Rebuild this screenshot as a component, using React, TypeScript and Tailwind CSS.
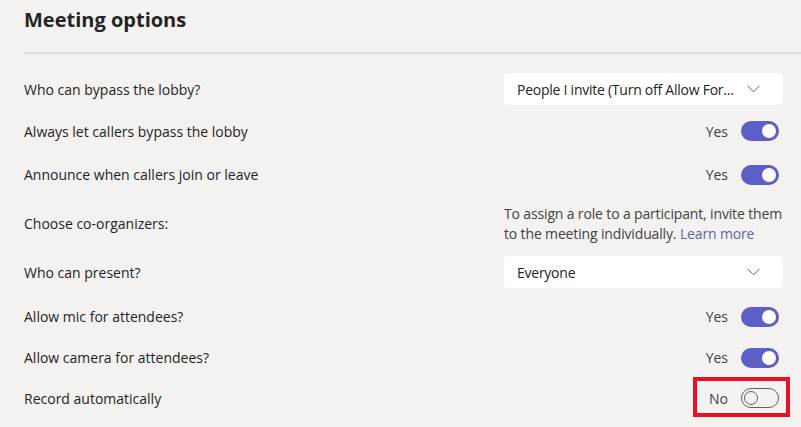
import React from 'react';

const font = { fontFamily: '"Segoe UI", "Open Sans", "Noto Sans", sans-serif' };

function Chevron() {
  return (
    <svg width="13" height="8" viewBox="0 0 13 8" fill="none" className="shrink-0">
      <path d="M0.5 0.8 L6.5 6.8 L12.5 0.8" stroke="#616161" strokeWidth="1" />
    </svg>
  );
}

function Dropdown({ value }: { value: string }) {
  return (
    <div className="w-[279px] h-[32px] bg-white rounded-[4px] flex items-center justify-between pl-[13px] pr-[23px]">
      <span className="whitespace-nowrap text-[14px] tracking-[-0.25px] text-[#242424]">{value}</span>
      <Chevron />
    </div>
  );
}

function Toggle({ on, label }: { on: boolean; label: string }) {
  return (
    <div className="flex items-center justify-end gap-[13px] pr-[4px]">
      <span className="text-[14px] text-[#424242]">{label}</span>
      {on ? (
        <div className="w-[38px] h-[20px] rounded-full bg-[#5b5fc7] flex items-center justify-end pr-[3px]">
          <div className="w-[14px] h-[14px] rounded-full bg-white" />
        </div>
      ) : (
        <div className="w-[38px] h-[20px] rounded-full border border-[#616161] flex items-center pl-[2px]">
          <div className="w-[14px] h-[14px] rounded-full border border-[#616161]" />
        </div>
      )}
    </div>
  );
}

type Row = { label: string; h: string; right: React.ReactNode };

const rows: Row[] = [
  { label: 'Who can bypass the lobby?', h: 'h-[44px]', right: <Dropdown value="People I invite (Turn off Allow For..." /> },
  { label: 'Always let callers bypass the lobby', h: 'h-[40px]', right: <Toggle on label="Yes" /> },
  { label: 'Announce when callers join or leave', h: 'h-[47px]', right: <Toggle on label="Yes" /> },
  {
    label: 'Choose co-organizers:',
    h: 'h-[51px]',
    right: (
      <p className="whitespace-nowrap text-[14px] leading-[20px] tracking-[-0.15px] text-[#424242]">
        To assign a role to a participant, invite them
        <br />
        to the meeting individually. <span className="text-[#6264a7]">Learn more</span>
      </p>
    ),
  },
  { label: 'Who can present?', h: 'h-[46px]', right: <Dropdown value="Everyone" /> },
  { label: 'Allow mic for attendees?', h: 'h-[43px]', right: <Toggle on label="Yes" /> },
  { label: 'Allow camera for attendees?', h: 'h-[39px]', right: <Toggle on label="Yes" /> },
  { label: 'Record automatically', h: 'h-[42px]', right: <Toggle on={false} label="No" /> },
];

export default function App() {
  return (
    <div className="w-[801px] h-[427px] bg-[#f3f2f1] overflow-hidden" style={font}>
      <h1 className="pl-6 pt-[6px] text-[20px] leading-[28px] font-bold text-[#242424]">Meeting options</h1>
      <div className="ml-6 mt-[18px] h-[2px] bg-[#e1dfdd]" />
      <div className="pl-6 pr-[18px] pt-[13px]">
        {rows.map((r, i) => (
          <div key={r.label} className={`relative flex items-center justify-between ${r.h}`}>
            <span className="text-[14px] text-[#242424]">{r.label}</span>
            <div className="w-[279px]">{r.right}</div>
            {i === rows.length - 1 && (
              <div className="absolute left-[669px] top-[0px] w-[97px] h-[40px] border-[4px] border-[#e81123]" />
            )}
          </div>
        ))}
      </div>
    </div>
  );
}
